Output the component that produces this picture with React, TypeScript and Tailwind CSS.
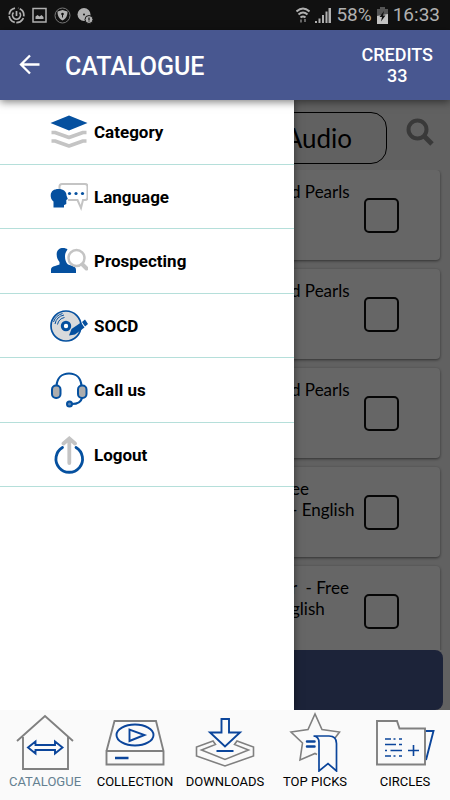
import type { ReactNode } from 'react';

interface MenuItem {
  label: string;
  icon: ReactNode;
}

interface Track {
  id: number;
  lines: string[];
}

const BLUE = '#05509f';
const GREY = '#c4c4c4';
const NAV_BLUE = '#0b459b';
const NAV_GREY = '#808080';

const menuItems: MenuItem[] = [
  {
    label: 'Category',
    icon: (
      <>
        <path
          d="M1.500 19.500H5l14 5 14-5h3.500M1.500 28H5l14 5 14-5h3.500"
          fill="none"
          stroke={GREY}
          strokeWidth="3.500"
          strokeLinejoin="round"
        />
        <path d="M19 2.500l18.500 7.500L19 17.500 .5 10z" fill={BLUE} />
      </>
    ),
  },
  {
    label: 'Language',
    icon: (
      <>
        <path
          d="M9.500 11V8.500q0-2.500 2.500-2.500h23q2.500 0 2.500 2.500v11q0 2.500-2.500 2.500h-2l-2 8-3.500-8H18"
          fill="none"
          stroke={GREY}
          strokeWidth="2"
        />
        <path
          d="M3.500 29.500v-6C1.500 22 .5 19.500 .7 17 1 13 4 11 8.500 11c5 0 8 2.500 8 6.500l1.300 3.500-1.500 1v4l-2 1H14v2.500z"
          fill={BLUE}
        />
        <circle cx="19.500" cy="15.500" r="1.600" fill={BLUE} />
        <circle cx="26" cy="15.500" r="1.600" fill={BLUE} />
        <circle cx="32.500" cy="15.500" r="1.600" fill={BLUE} />
      </>
    ),
  },
  {
    label: 'Prospecting',
    icon: (
      <>
        <path
          d="M1 31v-3.500c0-2 1.500-3 4-3.500l4.500-1.500v-2.500C7.500 18 6.500 15 6.700 11.500 7 8 9.500 6 13 6c2 0 3.500.5 4.500 1.500-1.500 2-2.500 4-2.500 7 0 3.500 1 6 3 8l4.500 1.500c2.500.7 3.500 1.800 3.500 4V31z"
          fill={BLUE}
        />
        <circle cx="26.500" cy="16" r="8" fill="#fff" stroke={GREY} strokeWidth="2.500" />
        <path d="M32.500 22.500l4 4" stroke={GREY} strokeWidth="4" strokeLinecap="round" />
      </>
    ),
  },
  {
    label: 'SOCD',
    icon: (
      <>
        <circle cx="16" cy="19" r="15" fill="#d9dadb" stroke={BLUE} strokeWidth="1.700" />
        <circle cx="16" cy="19" r="3.700" fill="#fff" stroke={BLUE} strokeWidth="3" />
        <path
          d="M5 17a11.500 11.500 0 0 1 9-9M7.500 17.500a9 9 0 0 1 7-7M3.500 15a13 13 0 0 1 9-8.500"
          fill="none"
          stroke={BLUE}
          strokeWidth="1"
        />
        <path d="M19 28.500l2.500-6.500L31 15.500l3.500 5-9.500 7z" fill={BLUE} />
        <path d="M32 15l3-2.500 3 4.500-3 2.500z" fill={BLUE} />
      </>
    ),
  },
  {
    label: 'Call us',
    icon: (
      <>
        <path
          d="M6.500 15C7 7 12 2.500 19 2.500S31 7 31.500 15M32 27c-1 4-4 6-10 6"
          fill="none"
          stroke={BLUE}
          strokeWidth="2.200"
        />
        <rect x="2" y="14.500" width="8.500" height="12.500" rx="4" fill="#adadad" stroke={BLUE} strokeWidth="2" />
        <rect x="28" y="14.500" width="8.500" height="12.500" rx="4" fill="#adadad" stroke={BLUE} strokeWidth="2" />
        <circle cx="19.500" cy="33" r="2.500" fill="#5d86b5" stroke={BLUE} strokeWidth="2" />
      </>
    ),
  },
  {
    label: 'Logout',
    icon: (
      <>
        <path d="M12.500 11.500a13.300 13.300 0 1 0 13.500 0" fill="none" stroke={BLUE} strokeWidth="2.800" strokeLinecap="round" />
        <path d="M19.300 27V4M13.500 7.500L19.300 2.500l5.700 5" fill="none" stroke={GREY} strokeWidth="3.800" strokeLinecap="round" />
      </>
    ),
  },
];

// The start of every title is hidden behind the open drawer
const tracks: Track[] = [
  { id: 1, lines: ['d Pearls'] },
  { id: 2, lines: ['d Pearls'] },
  { id: 3, lines: ['d Pearls'] },
  { id: 4, lines: ['ee', '- English'] },
  { id: 5, lines: ['r  - Free', 'glish'] },
];

const tabs: MenuItem[] = [
  {
    label: 'CATALOGUE',
    icon: (
      <>
        <path d="M4 31L32 6l28 25M10 27v32h45V27" stroke={NAV_GREY} />
        <path d="M15 37.500l7.500-6V35H42v-3.500l7.500 6-7.500 6V40H22.500v3.500z" stroke={NAV_BLUE} />
      </>
    ),
  },
  {
    label: 'COLLECTION',
    icon: (
      <>
        <path d="M3.500 41L11.500 11H53l7.500 30v13.500h-57V41h57" stroke={NAV_GREY} />
        <ellipse cx="32" cy="25" rx="18.500" ry="10.500" stroke={NAV_BLUE} />
        <path d="M26.500 19.500V31l15-6z" stroke={NAV_BLUE} />
        <path d="M12 48h13.500" stroke={NAV_BLUE} strokeWidth="2.500" />
      </>
    ),
  },
  {
    label: 'DOWNLOADS',
    icon: (
      <>
        <path
          d="M20 31L3.500 37v9L32 56l28.500-10v-9L44 31l-2.500 3.500L55.500 40 32 49.500 8.500 40l14-5.500z"
          stroke={NAV_GREY}
          strokeWidth="1.600"
        />
        <path d="M28.500 9h7.500v13.500h11L32 36.500l-15-14h11.500zM23.500 41h17" stroke={NAV_BLUE} />
      </>
    ),
  },
  {
    label: 'TOP PICKS',
    icon: (
      <>
        <path
          d="M52 28l4.500-6-17.500-2.500L32 4l-7 15.500L8 22l11.500 11L17 50l15-6.500 2 1"
          stroke={NAV_GREY}
          strokeWidth="1.600"
        />
        <path
          d="M30.500 26H46q7.500 0 7.500 7.500V61L45 53.500 36 61V32.500q0-6-5.500-6.500"
          fill="#fafafa"
          stroke={NAV_BLUE}
          strokeWidth="1.700"
        />
        <path d="M24 31.500h7.500M24 36.500h7.500" stroke={NAV_BLUE} strokeWidth="2.500" strokeLinecap="round" />
      </>
    ),
  },
  {
    label: 'CIRCLES',
    icon: (
      <>
        <path d="M52 21h8.500L53 50" stroke={NAV_BLUE} />
        <path d="M4 11h20l2.500 7.500H52v36H4z" stroke={NAV_GREY} />
        <path
          d="M12 29h6M20.500 29h2M26 29h3M12 34.500h11M26 34.500h3M12 40.500h2M17.500 40.500H29M12 46h6M20.500 46h2M26 46h3M35 40.500h11M40.500 35v11"
          stroke={NAV_BLUE}
          strokeWidth="1.600"
        />
      </>
    ),
  },
];

function StatusBar() {
  return (
    <div className="flex h-[30px] shrink-0 items-center justify-between bg-[#111111] pr-[10px] pl-2 text-[#b0b0b0]">
      <div className="flex items-center gap-[6px]">
        <svg className="h-[17px] w-[17px]" viewBox="0 0 17 17" fill="none" stroke="currentColor" strokeWidth="1.700">
          <path d="M7 1.200a7.300 7.300 0 1 0 3 0" strokeDasharray="9 1.500" />
          <path d="M5.500 5.500a4 4 0 1 0 6 0M8.500 4v5" />
        </svg>
        <svg className="h-[17px] w-[17px]" viewBox="0 0 17 17" fill="none" stroke="currentColor" strokeWidth="1.500">
          <rect x="2" y="1.500" width="13" height="13.500" />
          <path d="M4.500 12V9.500L6.500 8l2 1.500 2-1.500 2 2v2z" fill="currentColor" stroke="none" />
        </svg>
        <svg className="h-[17px] w-[17px]" viewBox="0 0 17 17">
          <circle cx="8.500" cy="8.500" r="7.500" fill="none" stroke="#777777" />
          <path d="M8.500 3l5 1.500c0 4.500-1.500 7-5 9-3.500-2-5-4.500-5-9z" fill="currentColor" />
          <circle cx="8.500" cy="7" r="1.300" fill="#111111" />
          <path d="M8.500 7v3.500" stroke="#111111" />
        </svg>
        <svg className="h-[17px] w-[17px]" viewBox="0 0 17 17">
          <circle cx="7" cy="7.500" r="6.500" fill="currentColor" />
          <circle cx="7" cy="7.500" r="1" fill="#111111" />
          <circle cx="12" cy="12.500" r="4" fill="currentColor" stroke="#111111" />
          <path d="M12 10.500v2.500M12 13.500v1" stroke="#111111" strokeWidth="1.200" />
        </svg>
      </div>
      <div className="flex items-center gap-[5px] text-[19px] leading-[22px]">
        <svg className="h-[17px] w-[14px]" viewBox="0 0 14 17" fill="none" stroke="currentColor" strokeWidth="2">
          <path d="M.5 4.500q6.500-6 13 0M2.500 7.500q4.500-4 9 0M4.500 10.500q2.500-2 5 0" />
          <path d="M5 15.500v-3M9 12v3" stroke="#666666" />
        </svg>
        <svg className="h-[16px] w-[16px]" viewBox="0 0 16 16" fill="currentColor">
          <path d="M0 14h2v2H0zM3.500 11.500h2V16h-2zM7 8h2v8H7zM10.500 4.500h2V16h-2zM13.500 1H16v15h-2.500z" />
        </svg>
        <span>58%</span>
        <svg className="h-[17px] w-[11px]" viewBox="0 0 11 17">
          <path d="M3 0h5v2h3v15H0V2h3z" fill="#555555" />
          <path d="M0 9l11-2v10H0z" fill="#c4c4c4" />
          <path d="M7 4L2.500 10H5l-1 4.500L8.500 8.500H6z" fill="#111111" />
        </svg>
        <span>16:33</span>
      </div>
    </div>
  );
}

function AppBar() {
  return (
    <header className="relative z-20 flex h-[70px] shrink-0 items-center bg-[#485790] px-[17px] text-white shadow-[0_2px_8px_rgba(0,0,0,0.5)]">
      <button type="button" aria-label="Back" className="mr-6">
        <svg className="h-6 w-6" viewBox="0 0 24 24" fill="none" stroke="currentColor" strokeWidth="2.300">
          <path d="M22.500 11.500H4M13 2.500l-9 9 9 9" />
        </svg>
      </button>
      <h1 className="pt-1 text-[25px] leading-7 font-medium">CATALOGUE</h1>
      <p className="ml-auto text-center text-[18px] leading-[21px] font-medium">
        CREDITS
        <br />
        33
      </p>
    </header>
  );
}

function TrackList() {
  return (
    <main className="flex h-full flex-col bg-[#f3f3f3] font-['Lato',sans-serif] text-black">
      <div className="flex shrink-0 items-start pt-3 pr-4 pb-[10px] pl-[10px]">
        <button
          type="button"
          className="h-[52px] flex-1 rounded-2xl border border-black pr-[34px] text-right text-[26px] leading-8"
        >
          Audio
        </button>
        <button type="button" aria-label="Search" className="mt-[6px] ml-[19px]">
          <svg className="h-7 w-7" viewBox="0 0 28 28" fill="none" stroke="#8e8e8e" strokeWidth="4">
            <circle cx="11.500" cy="11.500" r="9" />
            <path d="M18 18l8 8" strokeWidth="5" />
          </svg>
        </button>
      </div>
      <ul className="-mt-1 flex min-h-0 flex-1 flex-col gap-[9px] overflow-hidden px-[10px]">
        {tracks.map((track) => (
          <li
            key={track.id}
            className="flex h-[90px] shrink-0 items-center justify-end rounded-sm bg-white pr-[41px] shadow-[0_1px_3px_rgba(0,0,0,0.5)]"
          >
            <label
              htmlFor={`track-${track.id}`}
              className="w-[73px] self-start pt-[11px] text-[17px] leading-[21px] whitespace-pre"
            >
              {track.lines.join('\n')}
            </label>
            <input
              id={`track-${track.id}`}
              type="checkbox"
              className="h-[35px] w-[35px] appearance-none rounded-[5px] border-2 border-[#111111]"
            />
          </li>
        ))}
      </ul>
      <button type="button" aria-label="Download selected" className="mx-[7px] h-[60px] shrink-0 rounded-lg bg-[#485790]" />
    </main>
  );
}

function Drawer() {
  return (
    <aside className="absolute inset-y-0 left-0 w-[294px] bg-white shadow-[0_0_8px_rgba(0,0,0,0.5)]">
      <ul className="grid h-[387px] grid-rows-6">
        {menuItems.map((item) => (
          <li key={item.label} className="border-b border-[#b5dfda]">
            <a href="#" className="flex h-full items-center gap-[6px] pt-px pl-[50px] text-[17px] leading-5 font-bold text-black">
              <svg className="h-[38px] w-[38px]" viewBox="0 0 38 38">
                {item.icon}
              </svg>
              {item.label}
            </a>
          </li>
        ))}
      </ul>
    </aside>
  );
}

function BottomNav() {
  return (
    <nav className="relative z-20 grid h-[90px] shrink-0 grid-cols-5 bg-[#fafafa]">
      {tabs.map((tab, index) => (
        <a
          key={tab.label}
          href="#"
          className={`flex flex-col items-center text-[13px] leading-5 ${index === 0 ? 'text-[#648091]' : 'text-black'}`}
        >
          <svg className="h-[62px] w-16" viewBox="0 0 64 62" fill="none" strokeWidth="1.900">
            {tab.icon}
          </svg>
          {tab.label}
        </a>
      ))}
    </nav>
  );
}

export default function App() {
  return (
    <div className="flex h-screen flex-col overflow-hidden font-['Roboto',sans-serif]">
      <StatusBar />
      <AppBar />
      <div className="relative min-h-0 flex-1">
        <TrackList />
        <div className="absolute inset-0 bg-black/60" />
        <Drawer />
      </div>
      <BottomNav />
    </div>
  );
}
